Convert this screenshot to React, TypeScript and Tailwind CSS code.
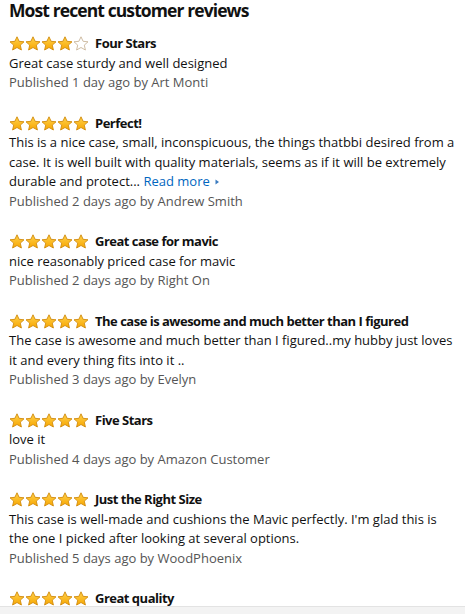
import React from "react";

type Review = { stars: number; title: string; body: React.ReactNode; meta: string };

const Star = ({ filled }: { filled: boolean }) => (
  <svg width="16" height="15" viewBox="0 0 16 15" className="block">
    <defs>
      <linearGradient id="sg" x1="0" y1="0" x2="0" y2="1">
        <stop offset="0" stopColor="#ffd24d" />
        <stop offset="1" stopColor="#f7a600" />
      </linearGradient>
    </defs>
    <path
      d="M8 0.8 L10.1 5.3 L15 5.8 L11.3 9.1 L12.4 14 L8 11.5 L3.6 14 L4.7 9.1 L1 5.8 L5.9 5.3 Z"
      fill={filled ? "url(#sg)" : "#ffffff"}
      stroke={filled ? "#d08a0c" : "#c9b59a"}
      strokeWidth="0.9"
      strokeLinejoin="round"
    />
  </svg>
);

const Stars = ({ n }: { n: number }) => (
  <div className="flex items-center">
    {[0, 1, 2, 3, 4].map((i) => (
      <Star key={i} filled={i < n} />
    ))}
  </div>
);

const reviews: Review[] = [
  { stars: 4, title: "Four Stars", body: "Great case sturdy and well designed", meta: "Published 1 day ago by Art Monti" },
  {
    stars: 5,
    title: "Perfect!",
    body: (
      <>
        This is a nice case, small, inconspicuous, the things thatbbi desired from a case. It is well built with quality materials, seems as if it will be extremely durable and protect...{" "}
        <span className="text-[#0066c0] whitespace-nowrap">
          Read more
          <svg width="7" height="8" viewBox="0 0 7 8" className="inline-block ml-[4px] align-[0px]">
            <path d="M1.5 1.5 L5 4 L1.5 6.5 Z" fill="#3b7bbf" />
          </svg>
        </span>
      </>
    ),
    meta: "Published 2 days ago by Andrew Smith",
  },
  { stars: 5, title: "Great case for mavic", body: "nice reasonably priced case for mavic", meta: "Published 2 days ago by Right On" },
  {
    stars: 5,
    title: "The case is awesome and much better than I figured",
    body: "The case is awesome and much better than I figured..my hubby just loves it and every thing fits into it ..",
    meta: "Published 3 days ago by Evelyn",
  },
  { stars: 5, title: "Five Stars", body: "love it", meta: "Published 4 days ago by Amazon Customer" },
  {
    stars: 5,
    title: "Just the Right Size",
    body: "This case is well-made and cushions the Mavic perfectly. I'm glad this is the one I picked after looking at several options.",
    meta: "Published 5 days ago by WoodPhoenix",
  },
  { stars: 5, title: "Great quality", body: "", meta: "" },
];

export default function App() {
  return (
    <div className="w-[465px] h-[614px] overflow-hidden bg-white flex flex-col" style={{ fontFamily: '"Open Sans", "Noto Sans", sans-serif' }}>
      <div className="flex-1 overflow-hidden pl-[9px] pr-[8px]">
        <h2 className="text-[17.5px] font-bold text-[#111] leading-[20px] tracking-[-0.9px]">Most recent customer reviews</h2>
        <div className="flex flex-col gap-[21px] mt-[14px]">
          {reviews.map((r, i) => (
            <div key={i} className="text-[13px] leading-[19.5px] text-[#111]">
              <div className="flex items-center gap-[6px] h-[19.5px]">
                <Stars n={r.stars} />
                <span className="font-bold tracking-[-0.5px]">{r.title}</span>
              </div>
              {r.body && <div>{r.body}</div>}
              {r.meta && <div className="text-[#555]">{r.meta}</div>}
            </div>
          ))}
        </div>
      </div>
      <div className="h-[8px] shrink-0 bg-[#f3f3f3] border-t border-[#e3e3e3]" />
    </div>
  );
}
